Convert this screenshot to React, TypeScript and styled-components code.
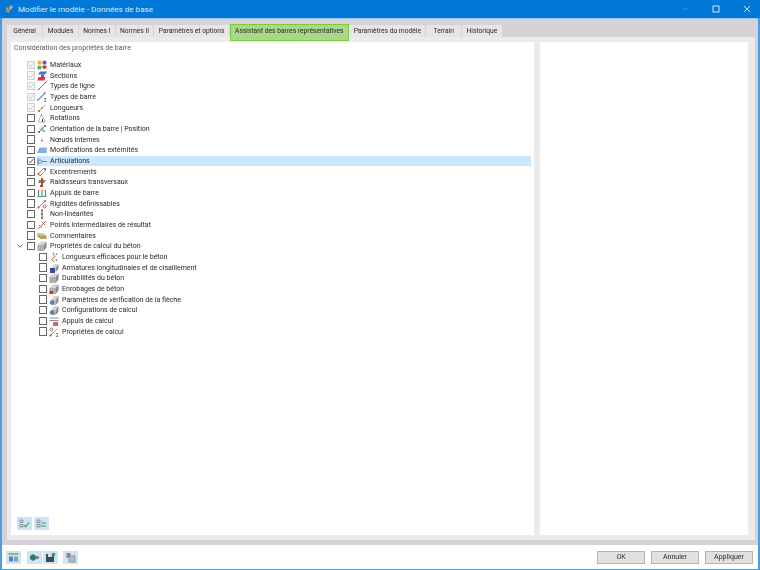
import { ReactNode } from 'react'
import styled, { createGlobalStyle } from 'styled-components'

const GlobalStyle = createGlobalStyle`
  html, body {
    margin: 0;
    padding: 0;
    background: #ffffff;
  }
  * {
    box-sizing: border-box;
  }
`

const Window = styled.div`
  width: 760px;
  height: 570px;
  display: flex;
  flex-direction: column;
  border: 2px solid #4a9fe2;
  border-top: none;
  border-bottom-width: 1px;
  background: #ffffff;
  font-family: Roboto, 'Open Sans', sans-serif;
  font-size: 7px;
  color: #2a2a2a;
`

const TitleBar = styled.div`
  height: 18px;
  flex: none;
  margin: 0 -2px;
  padding: 0 0 0 4px;
  display: flex;
  align-items: center;
  gap: 4px;
  background: #0078d7;
  color: #ffffff;
  font-size: 8.1px;
`

const TitleText = styled.span`
  flex: 1;
  color: #dcebf8;
`

const WindowButton = styled.div`
  width: 27px;
  height: 18px;
  display: flex;
  align-items: center;
  justify-content: center;
`

const Body = styled.div`
  flex: 1;
  display: flex;
  flex-direction: column;
  padding: 6px 3px 5px 5px;
  background: #d3d2d6;
  border-top: 1px solid #9fc4e6;
`

const TabBar = styled.div`
  display: flex;
  gap: 1px;
  height: 12px;
  align-items: stretch;
  font-size: 6.7px;
`

const Tab = styled.div<{ $active?: boolean }>`
  display: flex;
  align-items: center;
  justify-content: center;
  min-width: 35px;
  padding: 0 4.3px ${(p) => (p.$active ? '2px' : '0')};
  background: ${(p) => (p.$active ? '#a9d88a' : '#e6e6e6')};
  border: ${(p) => (p.$active ? '1.5px solid #7ccc3c' : 'none')};
  margin: ${(p) => (p.$active ? '-1.5px -0.5px -3.5px 0' : '0')};
  position: ${(p) => (p.$active ? 'relative' : 'static')};
  white-space: nowrap;
`

// grey text edges, the reference has no coloured fringes
const Label = styled.span`
  filter: grayscale(1);
`

const Panels = styled.div`
  flex: 1;
  display: flex;
  gap: 6px;
  padding: 5px 7px 5px 4px;
  background: #ebebeb;
`

const LeftPanel = styled.div`
  width: 523px;
  flex: none;
  display: flex;
  flex-direction: column;
  padding: 1px 3px 5px 3px;
  background: #ffffff;
`

const RightPanel = styled.div`
  flex: 1;
  background: #ffffff;
`

const Heading = styled.div`
  height: 11px;
  line-height: 11px;
  color: #4a5a78;
`

const Tree = styled.div`
  flex: 1;
  display: flex;
  flex-direction: column;
  padding-top: 5.5px;
`

const Row = styled.div<{ $child?: boolean }>`
  height: 10.68px;
  display: flex;
  align-items: center;
  gap: 2px;
  padding-left: ${(p) => (p.$child ? '24.7px' : '12.7px')};
  white-space: nowrap;
  position: relative;
`

const RowLabel = styled.div<{ $selected?: boolean }>`
  flex: 1;
  height: 100%;
  display: flex;
  align-items: center;
  gap: 3px;
  background: ${(p) => (p.$selected ? '#cce8ff' : 'transparent')};
`

const Chevron = styled.svg`
  position: absolute;
  left: 3px;
  top: 2.5px;
  width: 6px;
  height: 6px;
`

const Check = styled.span<{ $disabled?: boolean }>`
  width: 8.4px;
  height: 8.4px;
  flex: none;
  display: flex;
  align-items: center;
  justify-content: center;
  background: ${(p) => (p.$disabled ? '#f4f4f4' : '#ffffff')};
  border: 1px solid ${(p) => (p.$disabled ? '#cfcfcf' : '#666666')};
`

const IconBox = styled.svg`
  width: 10px;
  height: 10px;
  flex: none;
`

const ToolRow = styled.div`
  display: flex;
  gap: 2px;
  padding-left: 3px;
`

const ToolButton = styled.div<{ $gapBefore?: number }>`
  width: 15px;
  height: 13px;
  margin-left: ${(p) => p.$gapBefore ?? 0}px;
  display: flex;
  align-items: center;
  justify-content: center;
  background: #cfe3f5;
`

const ToolIcon = styled.svg`
  width: 11px;
  height: 11px;
`

const Footer = styled.div`
  height: 24px;
  flex: none;
  display: flex;
  align-items: center;
  padding: 0 5px 0 4px;
  gap: 1px;
`

const Spacer = styled.div`
  flex: 1;
`

const DialogButton = styled.div`
  width: 48px;
  height: 13px;
  margin-left: 5px;
  display: flex;
  align-items: center;
  justify-content: center;
  background: #e1e1e1;
  border: 1px solid #b5b5b5;
`

const concreteBlock = (
  <>
    <path d="M0.5 4 3.5 0.5h6L6.5 4z" fill="#d5d5d5" />
    <path d="M0.5 4h6v6h-6z" fill="#a8a8a8" />
    <path d="M6.5 4l3-3.5v6L6.5 10z" fill="#8a8a8a" />
    <path d="M2.5 4v6M4.5 4v6" stroke="#c8c8c8" strokeWidth="0.5" />
  </>
)

const icons: Record<string, ReactNode> = {
  materials: (
    <>
      <rect x="0.5" y="0.5" width="4" height="4" rx="1.5" fill="#eeb41e" />
      <rect x="5.5" y="0.5" width="4" height="4" rx="1.5" fill="#6a5ac8" />
      <rect x="0.5" y="5.5" width="4" height="4" rx="1.5" fill="#55b045" />
      <path d="M5.5 5.5h4v2l-2 2-2-2z" fill="#e0332e" />
    </>
  ),
  sections: (
    <>
      <path d="M3 0.5h7L8 3.5H1z" fill="#4a70d8" />
      <path d="M4 3.5h3v3H4z" fill="#9a4a9a" />
      <path d="M1.5 6h7l-1 3.5h-7z" fill="#e0333a" />
    </>
  ),
  line: (
    <>
      <path d="M1.5 8.5 8.5 1.5" stroke="#7a4a4a" strokeWidth="0.8" />
      <circle cx="1.5" cy="8.5" r="0.8" fill="#d03030" />
      <circle cx="8.5" cy="1.5" r="0.8" fill="#d03030" />
    </>
  ),
  barType: (
    <>
      <path d="M1 8 8 1" stroke="#6f8fd8" strokeWidth="1.3" />
      <circle cx="1" cy="8" r="0.8" fill="#d03030" />
      <circle cx="8" cy="1" r="0.8" fill="#d03030" />
      <path d="M7 6.5h2.4M8.2 6.5v3M7 9.5h2.4" stroke="#555" strokeWidth="0.6" fill="none" />
    </>
  ),
  length: (
    <>
      <path d="M1.5 8.5 8.5 1.5" stroke="#555" strokeWidth="0.8" strokeDasharray="1.6 1" />
      <circle cx="2" cy="8" r="0.9" fill="#d03030" />
      <circle cx="5" cy="5" r="0.8" fill="#555" />
    </>
  ),
  rotation: (
    <>
      <path d="M1 9 4.5 1.5 8.5 9z" fill="none" stroke="#9a9a9a" strokeWidth="0.7" />
      <path d="M5.5 6v3" stroke="#404040" strokeWidth="1" />
      <circle cx="4.5" cy="2" r="0.7" fill="#d05050" />
    </>
  ),
  orientation: (
    <>
      <path d="M1 9 9 1" stroke="#4f9fa5" strokeWidth="1" />
      <path d="M2 5h5M5 2v6" stroke="#8a8a8a" strokeWidth="0.7" />
      <circle cx="2" cy="8" r="1" fill="#d03030" />
      <circle cx="8" cy="2" r="1" fill="#d03030" />
      <circle cx="7" cy="7" r="0.9" fill="#3f9f4f" />
    </>
  ),
  nodes: <circle cx="5" cy="5.5" r="0.9" fill="#d04040" />,
  ends: <path d="M2.5 2.5h7.5l-.5 5.5H0z" fill="#86aede" />,
  hinge: (
    <>
      <path d="M3 5.5h7" stroke="#5a7fa5" strokeWidth="0.9" />
      <circle cx="3" cy="5.5" r="1.6" fill="#ffffff" stroke="#30506f" strokeWidth="0.7" />
      <path d="M1 1.5v8" stroke="#3f7fb0" strokeWidth="0.9" />
    </>
  ),
  eccentric: (
    <>
      <path d="M1 7 7 1l2 2-6 6z" fill="none" stroke="#8a8a8a" strokeWidth="0.9" />
      <circle cx="1.5" cy="7" r="1" fill="#d03030" />
      <circle cx="8" cy="2" r="1" fill="#d03030" />
    </>
  ),
  stiffener: (
    <>
      <path d="M2 3h7L7 6H1z" fill="#8c7f70" />
      <path d="M4 1h2v9H4z" fill="#a5562f" />
      <path d="M3 8h3v2H3z" fill="#d04030" />
    </>
  ),
  support: (
    <>
      <path d="M1 2.5h8" stroke="#d04040" strokeWidth="1" strokeDasharray="1.2 2.2" />
      <path d="M1.5 3v5M5 3v5M8.5 3v5" stroke="#3f8f6f" strokeWidth="1.1" />
      <path d="M0.5 8.5h9" stroke="#3f8f6f" strokeWidth="0.9" />
    </>
  ),
  rigidity: (
    <>
      <path d="M1 9 8 2" stroke="#7f93b0" strokeWidth="1" />
      <circle cx="1.5" cy="8.5" r="1" fill="#d03030" />
      <circle cx="8" cy="2" r="0.9" fill="#d03030" />
      <circle cx="7.5" cy="7.5" r="1.4" fill="none" stroke="#505050" strokeWidth="0.7" />
    </>
  ),
  nonlinear: (
    <>
      <path d="M5 0.5v9.5" stroke="#6a6a6a" strokeWidth="0.8" />
      <circle cx="5" cy="1.5" r="1" fill="#d03030" />
      <circle cx="5" cy="5" r="1.2" fill="#3f9f4f" />
      <circle cx="5" cy="8.7" r="1" fill="#d03030" />
    </>
  ),
  points: (
    <>
      <path d="M1 9 9 1" stroke="#555" strokeWidth="0.8" />
      <path d="M2 5l3 3M5 2l3 3" stroke="#d04040" strokeWidth="0.8" />
    </>
  ),
  comments: (
    <>
      <path d="M0.5 2h5l4 2.5v3.5H3.5L0.5 5.5z" fill="#b3a268" />
      <path d="M0.5 2h5l4 2.5H3.5z" fill="#d8cb95" />
    </>
  ),
  concrete: concreteBlock,
  effective: (
    <>
      <path d="M5 0.5C2 2.5 8 4 5 5.5S2 8 5 9.8" fill="none" stroke="#d04030" strokeWidth="1" />
      <circle cx="7.5" cy="2" r="0.9" fill="#40b0c0" />
      <circle cx="7.5" cy="8" r="0.9" fill="#40b0c0" />
    </>
  ),
  rebar: (
    <>
      <path d="M2 5 5 1h4.5L6.5 5z" fill="#d5d5d5" />
      <path d="M6.5 5 9.5 1v5L6.5 9z" fill="#909090" />
      <path d="M1 5h5v5H1z" fill="#3b4a8c" />
    </>
  ),
  cover: (
    <>
      {concreteBlock}
      <path d="M0.5 7h3.5v3H0.5z" fill="#d03030" />
    </>
  ),
  deflection: (
    <>
      <path d="M2 5 5 1h4.5L6.5 5z" fill="#d5d5d5" />
      <path d="M6.5 5 9.5 1v6L6.5 10z" fill="#909090" />
      <path d="M2 5h4.5v5H2z" fill="#b0b0b0" />
      <circle cx="3" cy="7.5" r="2.2" fill="#5f7fb5" />
    </>
  ),
  calcSupport: (
    <>
      <path d="M0.5 2h9M0.5 4.5h9" stroke="#707070" strokeWidth="0.8" />
      <path d="M4 6h5v4H4z" fill="#cf4a4a" />
      <path d="M5 6v4M7 6v4" stroke="#f0d0d0" strokeWidth="0.5" />
    </>
  ),
  calcProps: (
    <>
      <path d="M1 9 8 2" stroke="#7f93b0" strokeWidth="0.9" />
      <circle cx="1.5" cy="8.5" r="1" fill="#d03030" />
      <circle cx="2.5" cy="2.5" r="1.4" fill="none" stroke="#505050" strokeWidth="0.7" />
      <path d="M7 6.5h2.4M8.2 6.5v3M7 9.5h2.4" stroke="#555" strokeWidth="0.6" fill="none" />
    </>
  ),
}

type Item = {
  label: string
  icon: string
  state?: 'disabled' | 'checked'
  selected?: boolean
  child?: boolean
  expander?: boolean
}

const items: Item[] = [
  { label: 'Matériaux', icon: 'materials', state: 'disabled' },
  { label: 'Sections', icon: 'sections', state: 'disabled' },
  { label: 'Types de ligne', icon: 'line', state: 'disabled' },
  { label: 'Types de barre', icon: 'barType', state: 'disabled' },
  { label: 'Longueurs', icon: 'length', state: 'disabled' },
  { label: 'Rotations', icon: 'rotation' },
  { label: 'Orientation de la barre | Position', icon: 'orientation' },
  { label: 'Nœuds internes', icon: 'nodes' },
  { label: 'Modifications des extémités', icon: 'ends' },
  { label: 'Articulations', icon: 'hinge', state: 'checked', selected: true },
  { label: 'Excentrements', icon: 'eccentric' },
  { label: 'Raidisseurs transversaux', icon: 'stiffener' },
  { label: 'Appuis de barre', icon: 'support' },
  { label: 'Rigidités définissables', icon: 'rigidity' },
  { label: 'Non-linéarités', icon: 'nonlinear' },
  { label: 'Points intermédiaires de résultat', icon: 'points' },
  { label: 'Commentaires', icon: 'comments' },
  { label: 'Propriétés de calcul du béton', icon: 'concrete', expander: true },
  { label: 'Longueurs efficaces pour le béton', icon: 'effective', child: true },
  { label: 'Armatures longitudinales et de cisaillement', icon: 'rebar', child: true },
  { label: 'Durabilités du béton', icon: 'concrete', child: true },
  { label: 'Enrobages de béton', icon: 'cover', child: true },
  { label: 'Paramètres de vérification de la flèche', icon: 'deflection', child: true },
  { label: 'Configurations de calcul', icon: 'deflection', child: true },
  { label: 'Appuis de calcul', icon: 'calcSupport', child: true },
  { label: 'Propriétés de calcul', icon: 'calcProps', child: true },
]

const tabs = [
  'Général',
  'Modules',
  'Normes I',
  'Normes II',
  'Paramètres et options',
  'Assistant des barres représentatives',
  'Paramètres du modèle',
  'Terrain',
  'Historique',
]

const ACTIVE_TAB = 'Assistant des barres représentatives'

const TreeRow = ({ item }: { item: Item }) => (
  <Row $child={item.child}>
    {item.expander && (
      <Chevron viewBox="0 0 6 6">
        <path d="M0.5 1.5 3 4.2 5.5 1.5" fill="none" stroke="#404040" strokeWidth="0.8" />
      </Chevron>
    )}
    <Check $disabled={item.state === 'disabled'}>
      {item.state && (
        <svg width="6" height="6" viewBox="0 0 6 6">
          <path
            d="M0.6 3 2.3 4.8 5.4 1"
            fill="none"
            stroke={item.state === 'disabled' ? '#c4c4c4' : '#404040'}
            strokeWidth="0.8"
          />
        </svg>
      )}
    </Check>
    <RowLabel $selected={item.selected}>
      <IconBox viewBox="0 0 10 10">{icons[item.icon]}</IconBox>
      <Label>{item.label}</Label>
    </RowLabel>
  </Row>
)

export default function App() {
  return (
    <>
      <GlobalStyle />
      <Window>
        <TitleBar>
          <svg width="10" height="11" viewBox="0 0 10 11">
            <path d="M2 8 7 1l2 2-5 6z" fill="#c9b28a" />
            <path d="M2 8l2 1-2 1.5z" fill="#3a3a3a" />
            <circle cx="3.5" cy="5" r="2.4" fill="#6c7f95" />
            <circle cx="3.5" cy="5" r="1" fill="#e0a030" />
          </svg>
          <TitleText>Modifier le modèle - Données de base</TitleText>
          <WindowButton>
            <svg width="8" height="8" viewBox="0 0 8 8">
              <path d="M1 4h6" stroke="#3d97e0" strokeWidth="0.8" />
            </svg>
          </WindowButton>
          <WindowButton>
            <svg width="8" height="8" viewBox="0 0 8 8">
              <rect x="1" y="1" width="6" height="6" fill="none" stroke="#ffffff" strokeWidth="0.8" />
            </svg>
          </WindowButton>
          <WindowButton>
            <svg width="8" height="8" viewBox="0 0 8 8">
              <path d="M1 1l6 6M7 1 1 7" stroke="#ffffff" strokeWidth="0.8" />
            </svg>
          </WindowButton>
        </TitleBar>
        <Body>
          <TabBar>
            {tabs.map((tab) => (
              <Tab key={tab} $active={tab === ACTIVE_TAB}>
                <Label>{tab}</Label>
              </Tab>
            ))}
          </TabBar>
          <Panels>
            <LeftPanel>
              <Heading>
                <Label>Considération des propriétés de barre</Label>
              </Heading>
              <Tree>
                {items.map((item) => (
                  <TreeRow key={item.label} item={item} />
                ))}
              </Tree>
              <ToolRow>
                <ToolButton>
                  <ToolIcon viewBox="0 0 11 11">
                    <path d="M1 2h3v2.5H1zM1 6.5h3V9H1z" fill="none" stroke="#707070" strokeWidth="0.7" />
                    <path d="M5 7l1.6 1.8L10 4.5" fill="none" stroke="#2f9f4f" strokeWidth="1.1" />
                  </ToolIcon>
                </ToolButton>
                <ToolButton>
                  <ToolIcon viewBox="0 0 11 11">
                    <path d="M1 2h3v2.5H1zM1 6.5h3V9H1z" fill="none" stroke="#707070" strokeWidth="0.7" />
                    <path d="M5 5h5M5 8h5" stroke="#2f9f4f" strokeWidth="0.9" />
                  </ToolIcon>
                </ToolButton>
              </ToolRow>
            </LeftPanel>
            <RightPanel />
          </Panels>
        </Body>
        <Footer>
          <ToolButton>
            <ToolIcon viewBox="0 0 11 11">
              <path d="M0.5 1h10v2h-10z" fill="#8fbf6f" />
              <path d="M1 4.5h4v5H1z" fill="#5f7fb5" />
              <path d="M6 4.5h4v5H6z" fill="#8a9fc5" />
            </ToolIcon>
          </ToolButton>
          <ToolButton $gapBefore={5}>
            <ToolIcon viewBox="0 0 11 11">
              <path d="M1 4l3-2 3 2v3L4 9 1 7z" fill="#2f7f5f" />
              <path d="M7.5 3.5 10.5 5.5 7.5 7.5z" fill="#606060" />
            </ToolIcon>
          </ToolButton>
          <ToolButton>
            <ToolIcon viewBox="0 0 11 11">
              <path d="M1 2h8v8H1z" fill="#3a4a5a" />
              <path d="M3 2h4v3H3z" fill="#d5dde5" />
              <circle cx="8.5" cy="2.5" r="1.8" fill="#2f9f4f" />
            </ToolIcon>
          </ToolButton>
          <ToolButton $gapBefore={4}>
            <ToolIcon viewBox="0 0 11 11">
              <path d="M1.5 1h4v5h-4z" fill="#8a8a8a" />
              <path d="M4 4h6v6H4z" fill="#b5bcc5" stroke="#606060" strokeWidth="0.5" />
            </ToolIcon>
          </ToolButton>
          <Spacer />
          <DialogButton><Label>OK</Label></DialogButton>
          <DialogButton><Label>Annuler</Label></DialogButton>
          <DialogButton><Label>Appliquer</Label></DialogButton>
        </Footer>
      </Window>
    </>
  )
}
